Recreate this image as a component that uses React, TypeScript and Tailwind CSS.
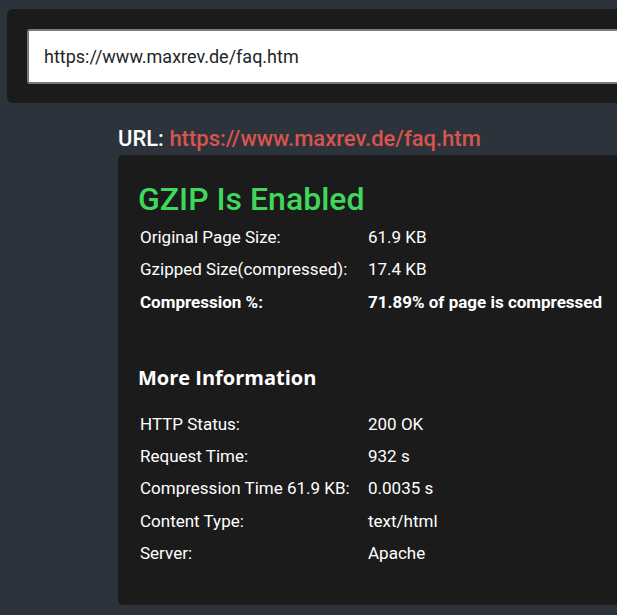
import React from "react";

const rows1 = [
  ["Original Page Size:", "61.9 KB", false],
  ["Gzipped Size(compressed):", "17.4 KB", false],
  ["Compression %:", "71.89% of page is compressed", true],
] as const;

const rows2 = [
  ["HTTP Status:", "200 OK"],
  ["Request Time:", "932 s"],
  ["Compression Time 61.9 KB:", "0.0035 s"],
  ["Content Type:", "text/html"],
  ["Server:", "Apache"],
];

export default function App() {
  return (
    <div
      className="w-[617px] h-[615px] overflow-hidden bg-[#2c333a] text-white"
      style={{ fontFamily: "Roboto, 'Liberation Sans', sans-serif" }}
    >
      <div className="ml-[7px] mt-[9px] w-[700px] h-[94px] rounded-[6px] bg-[#1b1b1b] pl-[20px] pt-[20px]">
        <div className="h-[55px] rounded-[3px] border-2 border-[#7a7a7a] bg-white pl-[15px] flex items-center text-[18px] text-[#212529]">
          https://www.maxrev.de/faq.htm
        </div>
      </div>

      <div className="ml-[118px] mt-[24px]">
        <div className="h-[24px] leading-[24px] text-[22px] font-medium">
          <span className="text-white">URL: </span>
          <span className="text-[#d9534f]">https://www.maxrev.de/faq.htm</span>
        </div>
        <div className="mt-[4px] w-[600px] h-[450px] rounded-[5px] bg-[#1b1b1b] pl-[20px] pt-[26px]">
          <div className="h-[36px] leading-[36px] text-[32px] font-medium text-[#40d85c]">
            GZIP Is Enabled
          </div>
          <div className="mt-[4px]">
            {rows1.map(([l, v, b]) => (
              <div
                key={l}
                className={`flex h-[32.5px] items-center pl-[2px] text-[17px] ${b ? "font-bold" : ""}`}
              >
                <div className="w-[228px]">{l}</div>
                <div>{v}</div>
              </div>
            ))}
          </div>
          <div
            className="mt-[46px] h-[26px] leading-[26px] text-[20px] font-bold"
            style={{ fontFamily: "'Open Sans', sans-serif" }}
          >
            More Information
          </div>
          <div className="mt-[18px]">
            {rows2.map(([l, v]) => (
              <div key={l} className="flex h-[32.3px] items-center pl-[2px] text-[17px]">
                <div className="w-[228px]">{l}</div>
                <div>{v}</div>
              </div>
            ))}
          </div>
        </div>
      </div>
    </div>
  );
}
